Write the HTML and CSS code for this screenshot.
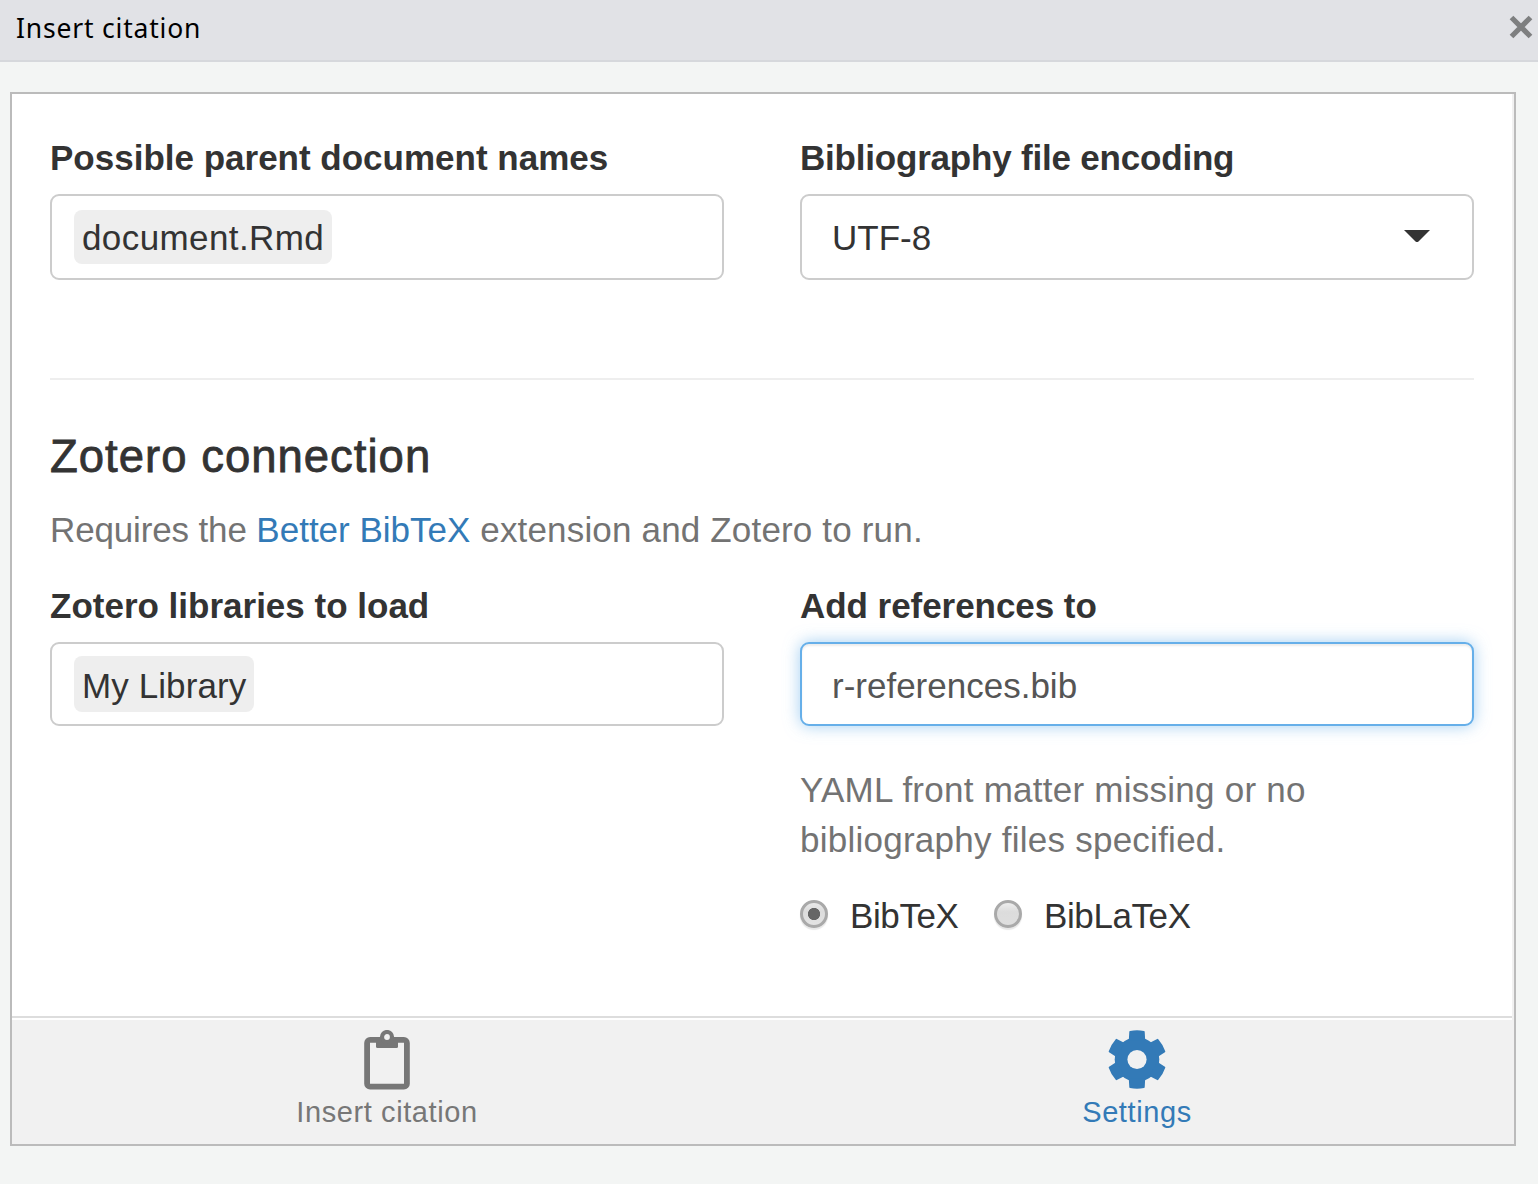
FILE: index.html
```html
<!DOCTYPE html>
<html lang="en">
<head>
<meta charset="utf-8">
<title>Insert citation</title>
<link rel="stylesheet" href="styles.css">
</head>
<body>
<header class="titlebar">
  <span class="titlebar-text">Insert citation</span>
  <svg class="close" viewBox="0 0 24 24" width="24" height="24"><path d="M2.500 2.500L21.500 21.500M21.500 2.500L2.500 21.500" stroke="#7e7f80" stroke-width="5.200"/></svg>
</header>
<main class="panel">
  <section class="content">
    <div class="row">
      <div class="field">
        <div class="label"><span class="t-parent">Possible parent document names</span></div>
        <div class="input tags"><span class="tag"><span class="t-doc">document.Rmd</span></span></div>
      </div>
      <div class="field">
        <div class="label"><span class="t-enc">Bibliography file encoding</span></div>
        <div class="input select"><span class="t-utf">UTF-8</span><svg class="caret" viewBox="0 0 26 12" width="26" height="12"><path d="M0 0H26L14.500 11.500Q13 12.700 11.500 11.500Z" fill="#333"/></svg></div>
      </div>
    </div>
    <hr class="rule">
    <h2 class="heading">Zotero connection</h2>
    <p class="help requires"><span class="t-req">Requires the </span><a class="link">Better BibTeX</a><span class="t-ext"> extension and Zotero to run.</span></p>
    <div class="row">
      <div class="field">
        <div class="label"><span class="t-lib">Zotero libraries to load</span></div>
        <div class="input tags short"><span class="tag tall"><span class="t-my">My Library</span></span></div>
      </div>
      <div class="field">
        <div class="label"><span class="t-add">Add references to</span></div>
        <div class="input short focused"><span class="t-ref">r-references.bib</span></div>
        <p class="help missing">YAML front matter missing or no<br>bibliography files specified.</p>
        <div class="radios">
          <span class="radio checked"></span><span class="radio-label first">BibTeX</span>
          <span class="radio"></span><span class="radio-label second">BibLaTeX</span>
        </div>
      </div>
    </div>
  </section>
  <nav class="tabs">
    <div class="tab">
      <svg class="icon" viewBox="0 0 60 62" width="60" height="62">
        <rect x="10.100" y="9.900" width="39.800" height="46.800" rx="3" fill="none" stroke="#777" stroke-width="5.800"/>
        <path fill="#777" d="M19 9H41V16.500Q41 18 39.500 18H20.500Q19 18 19 16.500z"/>
        <circle cx="30" cy="7" r="5" fill="#f1f1f1" stroke="#777" stroke-width="4.200"/>
      </svg>
      <span class="tab-text">Insert citation</span>
    </div>
    <div class="tab active">
      <svg class="icon" viewBox="-30 -29.500 60 62" width="60" height="62">
        <defs><path id="tooth" d="M-8.200-19L-7.700-27.800Q-7.600-28.500-7-28.600Q0-30 7-28.600Q7.600-28.500 7.700-27.800L8.200-19z"/></defs>
        <g fill="#337ab7">
          <circle r="22.300"/>
          <use href="#tooth"/><use href="#tooth" transform="rotate(60)"/><use href="#tooth" transform="rotate(120)"/>
          <use href="#tooth" transform="rotate(180)"/><use href="#tooth" transform="rotate(240)"/><use href="#tooth" transform="rotate(300)"/>
        </g>
        <circle r="9.600" fill="#f1f1f1"/>
      </svg>
      <span class="tab-text">Settings</span>
    </div>
  </nav>
</main>
</body>
</html>
```
FILE: styles.css
```css
* { box-sizing: border-box; }
body {
  margin: 0;
  height: 1184px;
  background: #f3f5f4;
  color: #333;
  font: 35px/50px "Liberation Sans", Arial, sans-serif;
  overflow: hidden;
}
.titlebar {
  display: flex;
  justify-content: space-between;
  height: 62px;
  padding: 0 5px 0 16px;
  background: #e1e2e6;
  border-bottom: 2px solid #d6d8dc;
}
.titlebar-text {
  color: #000;
  font: 26.500px/56px "Noto Sans", sans-serif;
  letter-spacing: 0.8px;
}
.close { margin-top: 15px; }
.panel {
  display: flex;
  flex-direction: column;
  width: 1506px;
  height: 1054px;
  margin: 30px 0 0 10px;
  padding-right: 2px;
  border: 2px solid #bbb;
  background: linear-gradient(to left, #f1f1f1 2px, #fff 2px);
}
.content { flex: 1; padding: 39px 38px 0; }
.row { display: grid; grid-template-columns: 674px 674px; gap: 76px; }
.label { height: 61px; font-weight: bold; white-space: nowrap; }
.input {
  display: flex;
  align-items: center;
  height: 86px;
  padding: 0 30px;
  border: 2px solid #ccc;
  border-radius: 9px;
  background: #fff;
}
.short { height: 84px; }
.tags { padding: 0 22px; }
.tag {
  height: 54px;
  padding: 0 8px;
  border-radius: 8px;
  background: #eee;
  line-height: 56px;
}
.tall { height: 56px; line-height: 60px; }
.select { justify-content: space-between; padding-right: 42px; }
.caret { margin-bottom: 2px; }
.focused {
  border-color: #66afe9;
  color: #555;
  padding-top: 4px;
  box-shadow: inset 0 2px 2px rgba(0,0,0,.075), 0 0 16px rgba(102,175,233,.6);
}
.t-doc { letter-spacing: 0.4px; }
.t-enc { letter-spacing: -0.2px; }
.t-utf { padding-top: 2px; }
.t-req { letter-spacing: -0.14px; }
.t-ext { letter-spacing: 0.17px; }
.t-my { letter-spacing: 0.1px; }
.t-add { letter-spacing: -0.05px; }
.rule { height: 2px; margin: 98px 0 49px; border: 0; background: #eee; }
.heading {
  margin: 0;
  font-size: 45.500px;
  line-height: 56px;
  font-weight: normal;
  letter-spacing: 1px;
  -webkit-text-stroke: 0.8px #333;
}
.help { margin: 0; color: #737373; white-space: nowrap; }
.requires { margin: 20px 0 26px; white-space: pre; }
.link { color: #337ab7; }
.missing { margin-top: 39px; letter-spacing: 0.25px; }
.radios { display: flex; align-items: center; height: 50px; margin-top: 26px; }
.radio {
  width: 28px;
  height: 28px;
  margin-bottom: 4px;
  border: 3px solid #a9a9a9;
  border-radius: 50%;
  background: linear-gradient(#eee, #dcdcdc 40%, #dedede);
  box-shadow: 0 2px 1px #e8e8e8;
}
.checked {
  background: radial-gradient(circle, #666 5.700px, transparent 6.500px), linear-gradient(#eee, #dcdcdc 40%, #e4e4e4);
  background-origin: border-box;
}
.radio-label { margin-left: 22px; letter-spacing: -0.4px; }
.first { width: 144px; }
.tabs {
  display: grid;
  grid-template-columns: 1fr 1fr;
  height: 128px;
  border-top: 2px solid #ddd;
  background: linear-gradient(#fff 2px, #f1f1f1 2px);
}
.tab {
  display: flex;
  flex-direction: column;
  align-items: center;
  padding-top: 12px;
  color: #777;
  font-size: 29px;
  line-height: 44px;
  letter-spacing: 0.6px;
}
.active { color: #337ab7; }
.icon { display: block; margin-bottom: -2px; }
```
